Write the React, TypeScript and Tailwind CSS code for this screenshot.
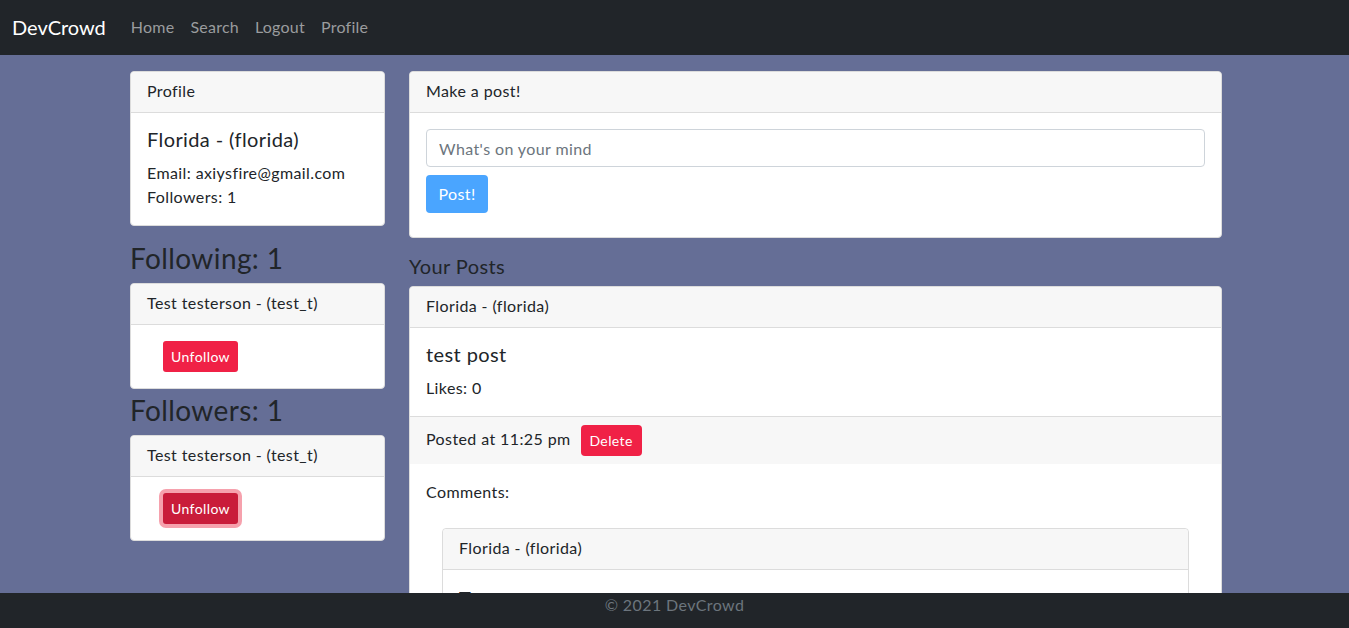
import React from 'react';

const font = { fontFamily: 'Lato, "Liberation Sans", sans-serif' };

const navLinks = ['Home', 'Search', 'Logout', 'Profile'];

function Card({ title, children }: { title: string; children: React.ReactNode }) {
  return (
    <div className="bg-white border border-[#dcdcdc] rounded-[4px]">
      <div className="bg-[#f7f7f7] border-b border-[#dcdcdc] px-4 h-[41px] flex items-center rounded-t-[4px] text-[16px] pb-[2px]">
        {title}
      </div>
      {children}
    </div>
  );
}

function UnfollowButton({ focused }: { focused?: boolean }) {
  return (
    <button
      className={`text-white text-[14px] rounded-[3px] w-[75px] h-[31px] leading-none ${
        focused ? 'bg-[#c91c3a] ring-4 ring-[#f6a1ad]' : 'bg-[#f02146]'
      }`}
    >
      Unfollow
    </button>
  );
}

export default function App() {
  return (
    <div className="min-h-screen bg-[#656e96] text-[#212529] tracking-[0.025em]" style={font}>
      {/* Navbar */}
      <nav className="bg-[#212529] h-[55px] flex items-center px-3 pb-[2px]">
        <span className="text-white text-[20px] mr-[17px] tracking-normal">DevCrowd</span>
        <div className="flex tracking-[0.015em]">
          {navLinks.map((l) => (
            <a key={l} className="px-2 text-[16px] text-[#9a9c9e]">
              {l}
            </a>
          ))}
        </div>
      </nav>

      {/* Content */}
      <div className="ml-[130px] pt-4 flex gap-6 items-start">
        {/* Left column */}
        <div className="w-[255px] shrink-0">
          <Card title="Profile">
            <div className="p-4">
              <div className="text-[20px] leading-6 mb-2 -mt-[2px] pb-[2px]">Florida - (florida)</div>
              <div className="text-[16px] leading-6">Email: axiysfire@gmail.com</div>
              <div className="text-[16px] leading-6">Followers: 1</div>
            </div>
          </Card>

          <h3 className="text-[28px] leading-[34px] mt-[15px] mb-2">Following: 1</h3>
          <Card title="Test testerson - (test_t)">
            <div className="px-8 py-4">
              <UnfollowButton />
            </div>
          </Card>

          <h3 className="text-[28px] leading-[34px] mt-1 mb-2">Followers: 1</h3>
          <Card title="Test testerson - (test_t)">
            <div className="px-8 py-4">
              <UnfollowButton focused />
            </div>
          </Card>
        </div>

        {/* Right column */}
        <div className="w-[813px] shrink-0">
          <Card title="Make a post!">
            <div className="p-4 pb-6">
              <input
                placeholder="What's on your mind"
                className="block w-full h-[38px] border border-[#ced4da] rounded-[4px] px-3 text-[16px] placeholder-[#6c757d] outline-none tracking-[0.025em]"
              />
              <button className="mt-2 bg-[#4aa5ff] text-white text-[16px] rounded-[4px] w-[62px] h-[38px]">Post!</button>
            </div>
          </Card>

          <h5 className="text-[20px] leading-6 mt-4 mb-2">Your Posts</h5>
          <div className="bg-white border border-[#dcdcdc] rounded-[4px]">
            <div className="bg-[#f7f7f7] border-b border-[#dcdcdc] px-4 h-[41px] flex items-center rounded-t-[4px] pb-[2px]">
              Florida - (florida)
            </div>
            <div className="p-4">
              <div className="text-[20px] leading-6 mb-2 -mt-[2px] pb-[2px]">test post</div>
              <div className="text-[16px] leading-6">Likes: 0</div>
            </div>
            <div className="bg-[#f7f7f7] border-t border-[#dcdcdc] px-4 py-2 flex items-center gap-[10px]">
              <span className="-mt-[3px]">Posted at 11:25 pm</span>
              <button className="bg-[#f02146] text-white text-[14px] rounded-[4px] w-[61px] h-[31px]">Delete</button>
            </div>
            <div className="px-4 pt-4">
              <div className="leading-6">Comments:</div>
              <div className="px-4 pt-6 pb-4">
                <div className="border border-[#dcdcdc] rounded-[4px]">
                  <div className="bg-[#f7f7f7] border-b border-[#dcdcdc] px-4 h-[41px] flex items-center rounded-t-[4px] pb-[2px]">
                    Florida - (florida)
                  </div>
                  <div className="p-4">
                    <div className="text-[20px] leading-6 mb-2">Test comment</div>
                    <div className="leading-6">Likes: 0</div>
                  </div>
                </div>
              </div>
            </div>
          </div>
        </div>
      </div>

      {/* Footer */}
      <footer className="fixed bottom-0 left-0 right-0 h-[35px] bg-[#212529] flex justify-center">
        <span className="text-[16px] text-[#6c757d]">© 2021 DevCrowd</span>
      </footer>
    </div>
  );
}
